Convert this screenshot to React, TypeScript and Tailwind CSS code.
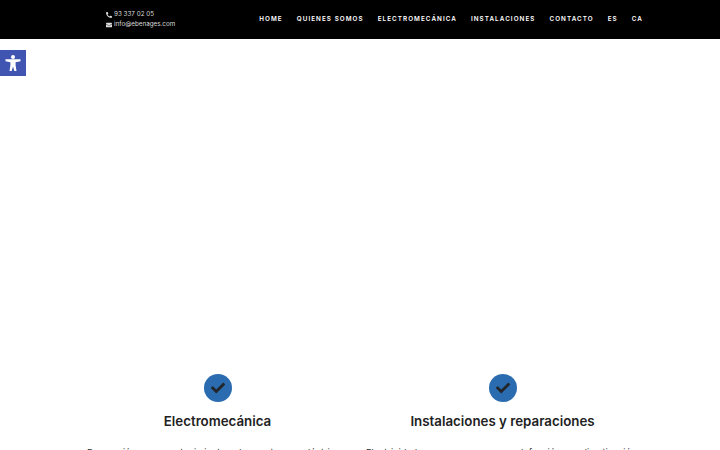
import { FaCheck, FaEnvelope, FaPhone } from "react-icons/fa";

const navItems = [
  "Home",
  "Quienes somos",
  "Electromecánica",
  "Instalaciones",
  "Contacto",
  "ES",
  "CA",
];

const Service = ({
  title,
  text,
  className,
}: {
  title: string;
  text: string;
  className: string;
}) => (
  <div className={`flex flex-col items-center ${className}`}>
    <div className="flex h-7 w-7 items-center justify-center rounded-full bg-[#2b6cb0] text-[14px] text-[#222529]">
      <FaCheck />
    </div>
    <h3 className="mt-[9px] whitespace-nowrap text-[13.3px] leading-[20px] font-semibold text-[#222222]">
      {title}
    </h3>
    <p className="mt-[15px] w-full text-justify text-[9.2px] leading-[14px] text-[#333333] [text-align-last:justify]">
      {text}
    </p>
  </div>
);

export default function App() {
  return (
    <div className="relative h-[450px] overflow-hidden bg-white font-['Inter','Liberation_Sans',sans-serif] antialiased">
      <header className="flex h-[39px] items-center justify-between bg-black pr-[77px] pl-[106px] text-white">
        <div className="flex flex-col gap-[1px] text-[6.3px] leading-[9px] text-[#dddddd]">
          <div className="flex items-center gap-[2px]">
            <FaPhone className="h-[6px] w-[6px] -scale-x-100" />
            <span>93 337 02 05</span>
          </div>
          <div className="flex items-center gap-[2px]">
            <FaEnvelope className="h-[6px] w-[6px]" />
            <span>info@ebenages.com</span>
          </div>
        </div>
        <nav className="flex gap-[14px]">
          {navItems.map((item) => (
            <a
              key={item}
              className="text-[6.3px] font-semibold tracking-[0.17em] whitespace-nowrap uppercase"
            >
              {item}
            </a>
          ))}
        </nav>
      </header>

      <button className="absolute top-[50px] left-0 flex h-[26px] w-[26px] items-center justify-center bg-[#4054b2]">
        <svg viewBox="0 0 16 16" className="h-[16px] w-[16px]" fill="white">
          <circle cx="8" cy="2" r="2" />
          <path d="M.5 4.2h15v2L10.6 7.2v3l.9 5.8H9.3L8 11.5 6.7 16H4.5l.9-5.8v-3L.5 6.2z" />
        </svg>
      </button>

      <main className="mt-[335px] flex pl-[87px]">
        <Service
          title="Electromecánica"
          text="Reparación y mantenimiento de motores eléctricos, bombas, frenos"
          className="w-[261px]"
        />
        <Service
          title="Instalaciones y reparaciones"
          text="Electricidad, agua, gas, calefacción, climatización, telecomunicaciones"
          className="ml-[18px] w-[273px] pr-0"
        />
      </main>
    </div>
  );
}
